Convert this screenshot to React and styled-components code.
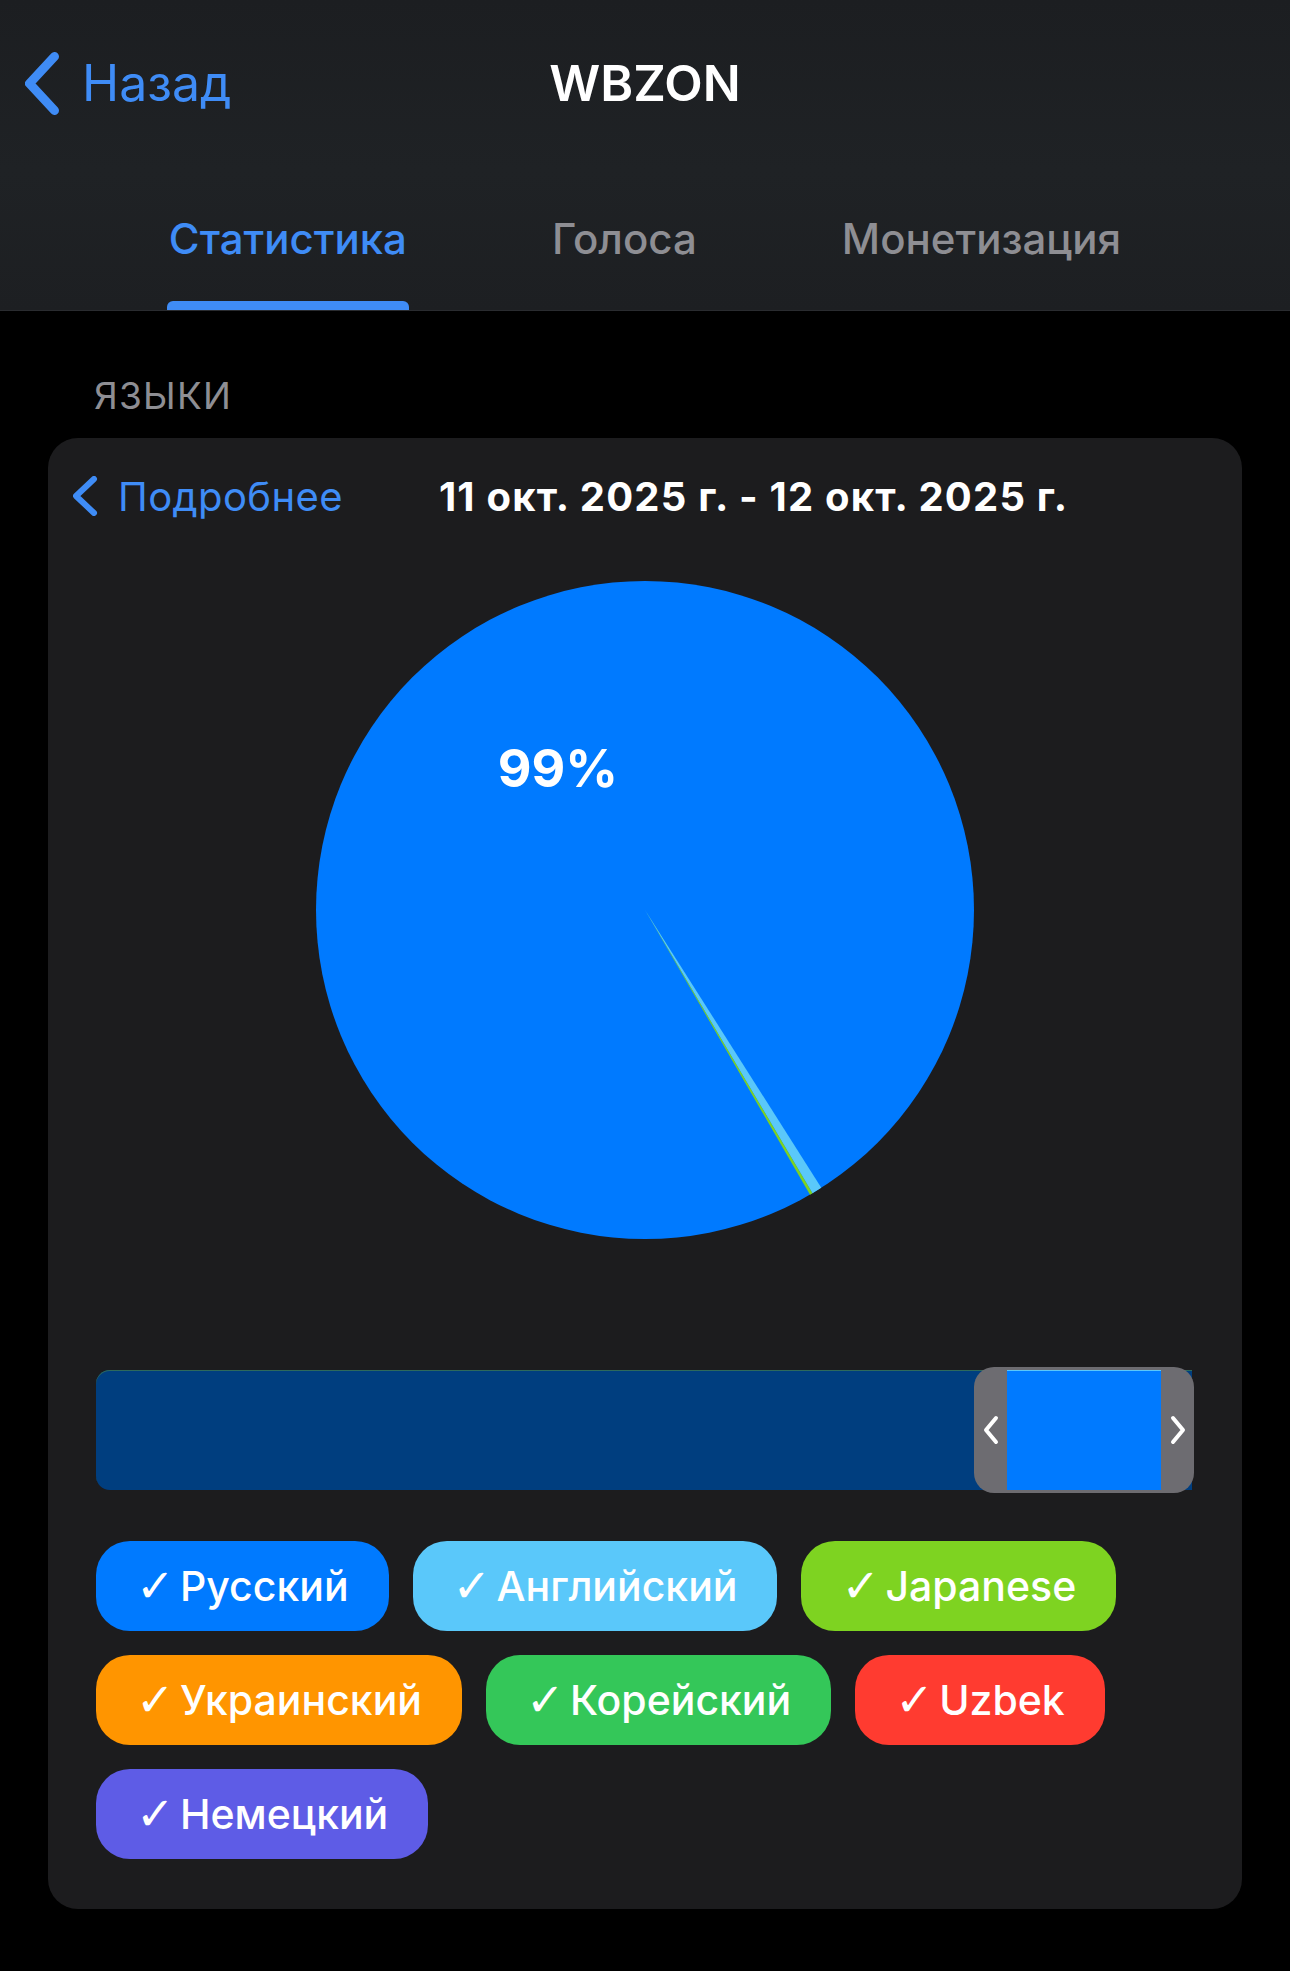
import styled, { createGlobalStyle } from 'styled-components';

const GlobalStyle = createGlobalStyle`
  html, body {
    margin: 0;
    padding: 0;
    background: #000;
  }
  body {
    font-family: Inter, "Noto Sans", "Liberation Sans", sans-serif;
    -webkit-font-smoothing: antialiased;
  }
  * {
    box-sizing: border-box;
  }
`;

const Page = styled.div`
  min-height: 1971px;
  background: #000;
  color: #fff;
`;

const Header = styled.header`
  background: linear-gradient(180deg, #1c1e21 0%, #1f2225 55%, #1d1f22 100%);
  border-bottom: 1px solid #2a2c30;
`;

const NavBar = styled.div`
  display: grid;
  grid-template-columns: 1fr auto 1fr;
  align-items: center;
  height: 166px;
`;

const BackButton = styled.button`
  display: flex;
  align-items: center;
  gap: 22px;
  justify-self: start;
  margin-left: 25px;
  background: none;
  border: none;
  padding: 0;
  color: #3f8cf6;
  font-family: inherit;
  font-size: 50px;
  line-height: 62px;
  cursor: pointer;
`;

const Title = styled.h1`
  margin: 0;
  font-size: 50px;
  font-weight: 600;
  color: #fff;
`;

const Tabs = styled.nav`
  display: flex;
  justify-content: center;
  gap: 145px;
  padding-top: 46px;
`;

const Tab = styled.div`
  display: flex;
  flex-direction: column;
  align-items: center;
  font-size: 42px;
  line-height: 54px;
  font-weight: 500;
  color: ${(p) => (p.$active ? '#3f8cf6' : '#8e8e93')};
`;

const Indicator = styled.span`
  display: block;
  margin-top: 35px;
  width: calc(100% + 4px);
  height: 9px;
  border-radius: 6px 6px 0 0;
  background: ${(p) => (p.$active ? '#3f8cf6' : 'transparent')};
`;

const Main = styled.main`
  padding: 0 48px;
`;

const SectionLabel = styled.div`
  margin-top: 63px;
  padding-left: 46px;
  font-size: 37px;
  line-height: 44px;
  letter-spacing: 1.2px;
  color: #8e8e93;
`;

const Card = styled.section`
  margin-top: 20px;
  background: #1c1c1e;
  border-radius: 30px;
  padding: 18px 48px 50px;
`;

const DetailRow = styled.div`
  display: flex;
  align-items: center;
  height: 80px;
  margin-left: -23px;
  gap: 96px;
`;

const DetailLink = styled.div`
  display: flex;
  align-items: center;
  gap: 20px;
  color: #3f8cf6;
  font-size: 40px;
  letter-spacing: 0.4px;
`;

const DateRange = styled.div`
  font-size: 40px;
  font-weight: 700;
  letter-spacing: 1.2px;
  color: #fff;
  white-space: nowrap;
`;

const PieWrap = styled.div`
  display: flex;
  justify-content: center;
  margin-top: 45px;
`;

const Slider = styled.div`
  position: relative;
  margin-top: 128px;
  height: 126px;
  padding: 3px 2px 3px 0;
`;

const Track = styled.div`
  height: 120px;
  background: #003e7f;
  border-radius: 14px 0 0 14px;
  box-shadow: inset 0 1px 0 #2d6a5c;
`;

const Handle = styled.div`
  position: absolute;
  top: 0;
  left: 878px;
  width: 220px;
  height: 126px;
  background: #6d6c71;
  border-radius: 20px;
  display: grid;
  grid-template-columns: 33px 1fr 33px;
  align-items: center;
`;

const Grip = styled.div`
  display: flex;
  justify-content: center;
  align-items: center;
`;

const Window = styled.div`
  height: 120px;
  background: #007aff;
  box-shadow: inset 0 1px 0 #5ac8fa;
`;

const Chips = styled.div`
  display: flex;
  flex-wrap: wrap;
  gap: 24px;
  margin-top: 48px;
`;

const Chip = styled.div`
  display: inline-flex;
  align-items: center;
  gap: 16px;
  height: 90px;
  padding: 0 40px;
  border-radius: 34px;
  background: ${(p) => p.$color};
  color: #fff;
  font-size: 41px;
  font-weight: 500;
  white-space: nowrap;
`;

const Check = styled.span`
  display: inline-block;
  width: 28px;
  font-family: "DejaVu Sans", sans-serif;
  font-weight: 400;
  font-size: 46px;
  line-height: 1;
`;

const languages = [
  { name: 'Русский', color: '#007aff' },
  { name: 'Английский', color: '#5ac8fa' },
  { name: 'Japanese', color: '#7ed321' },
  { name: 'Украинский', color: '#ff9500' },
  { name: 'Корейский', color: '#34c759' },
  { name: 'Uzbek', color: '#ff3b30' },
  { name: 'Немецкий', color: '#5e5ce6' },
];

const R = 329;

const pt = (deg) => {
  const a = (deg * Math.PI) / 180;
  return `${(R + R * Math.sin(a)).toFixed(2)} ${(R - R * Math.cos(a)).toFixed(2)}`;
};

const wedge = (a0, a1) => `M ${R} ${R} L ${pt(a0)} A ${R} ${R} 0 0 1 ${pt(a1)} Z`;

const PieChart = () => (
  <svg width={R * 2} height={R * 2} viewBox={`0 0 ${R * 2} ${R * 2}`}>
    <circle cx={R} cy={R} r={R} fill="#007aff" />
    <path d={wedge(147.6, 149.4)} fill="#5ac8fa" />
    <path d={wedge(149.4, 149.9)} fill="#7ed321" />
    <text
      x={242}
      y={206}
      textAnchor="middle"
      fill="#fff"
      fontSize="52"
      fontWeight="700"
      fontFamily="Inter, 'Liberation Sans', sans-serif"
    >
      99%
    </text>
  </svg>
);

const ChevronLeft = ({ w, h, sw }) => (
  <svg width={w} height={h} viewBox={`0 0 ${w} ${h}`} fill="none">
    <path
      d={`M${w - sw / 2 - 1} ${sw / 2} L${sw / 2} ${h / 2} L${w - sw / 2 - 1} ${h - sw / 2}`}
      stroke="currentColor"
      strokeWidth={sw}
      strokeLinecap="round"
      strokeLinejoin="round"
    />
  </svg>
);

const GripArrow = ({ dir }) => (
  <svg width="16" height="30" viewBox="0 0 16 30" fill="none">
    <path
      d={dir === 'left' ? 'M13 3 L3 15 L13 27' : 'M3 3 L13 15 L3 27'}
      stroke="#fff"
      strokeWidth="4"
      strokeLinecap="round"
      strokeLinejoin="round"
    />
  </svg>
);

const App = () => {
  return (
    <Page>
      <GlobalStyle />
      <Header>
        <NavBar>
          <BackButton type="button">
            <ChevronLeft w={35} h={63} sw={9} />
            Назад
          </BackButton>
          <Title>WBZON</Title>
          <div />
        </NavBar>
        <Tabs>
          <Tab $active>
            Статистика
            <Indicator $active />
          </Tab>
          <Tab>
            Голоса
            <Indicator />
          </Tab>
          <Tab>
            Монетизация
            <Indicator />
          </Tab>
        </Tabs>
      </Header>

      <Main>
        <SectionLabel>ЯЗЫКИ</SectionLabel>
        <Card>
          <DetailRow>
            <DetailLink>
              <ChevronLeft w={25} h={40} sw={6} />
              Подробнее
            </DetailLink>
            <DateRange>11 окт. 2025 г. - 12 окт. 2025 г.</DateRange>
          </DetailRow>

          <PieWrap>
            <PieChart />
          </PieWrap>

          <Slider>
            <Track />
            <Handle>
              <Grip>
                <GripArrow dir="left" />
              </Grip>
              <Window />
              <Grip>
                <GripArrow dir="right" />
              </Grip>
            </Handle>
          </Slider>

          <Chips>
            {languages.map((l) => (
              <Chip key={l.name} $color={l.color}>
                <Check>✓</Check>
                {l.name}
              </Chip>
            ))}
          </Chips>
        </Card>
      </Main>
    </Page>
  );
};

export default App;
